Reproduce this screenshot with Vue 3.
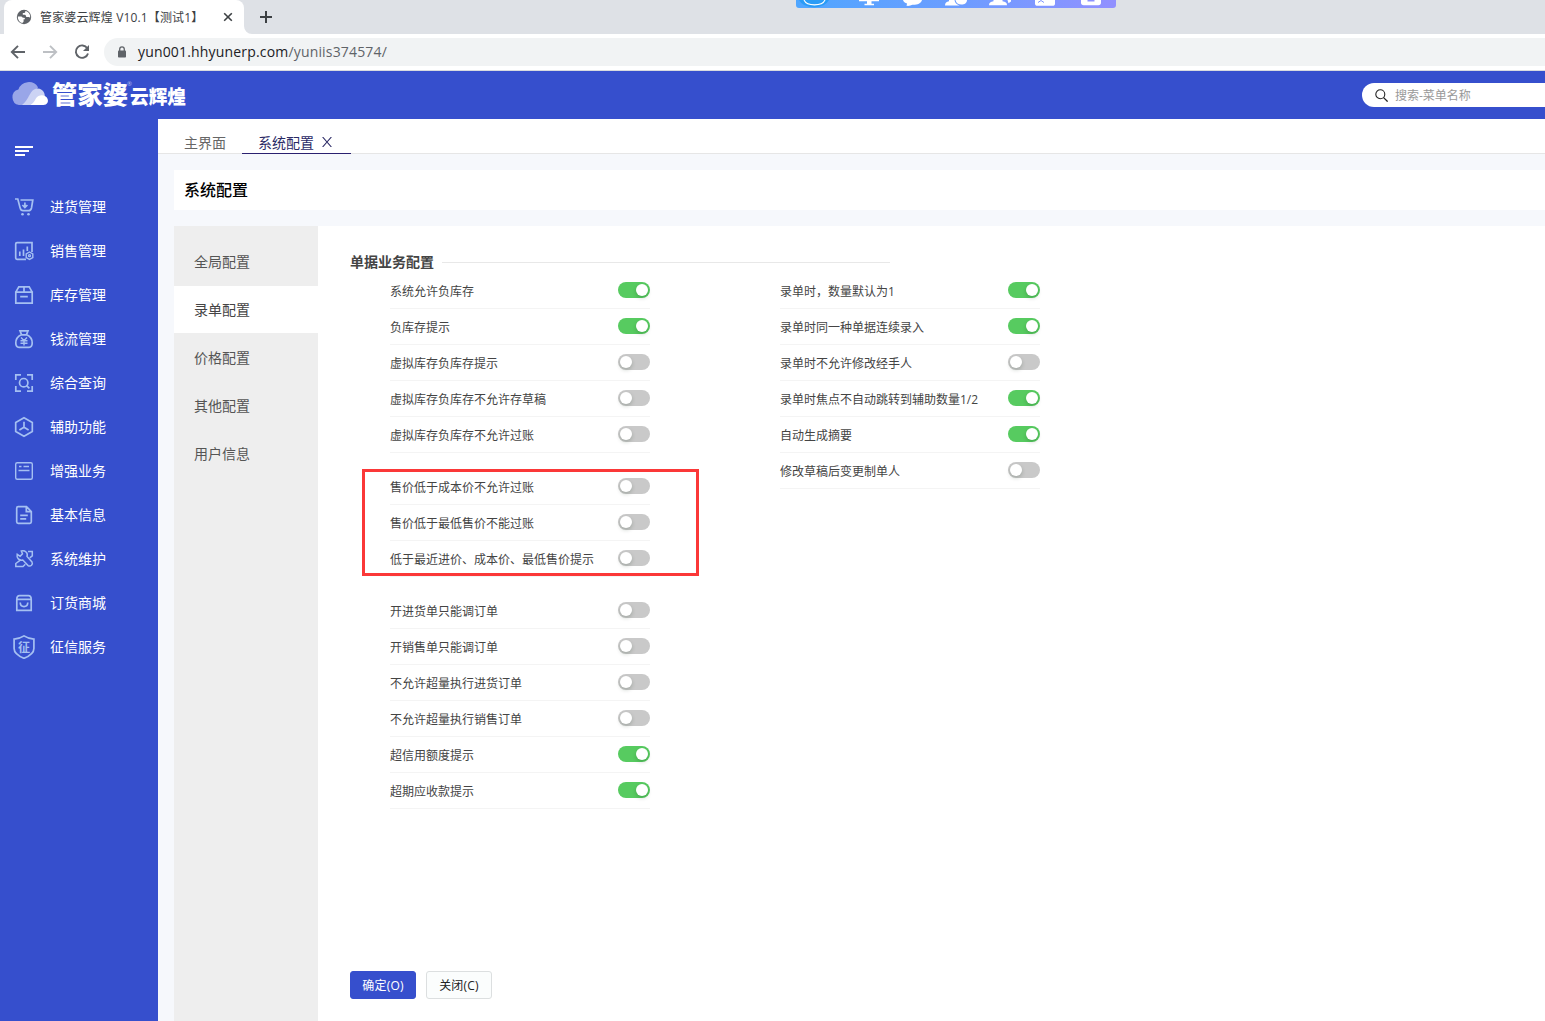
<script setup>
import { ref } from 'vue'

const menu = [
  { label: '进货管理', icon: 'cart' },
  { label: '销售管理', icon: 'sales' },
  { label: '库存管理', icon: 'box' },
  { label: '钱流管理', icon: 'money' },
  { label: '综合查询', icon: 'query' },
  { label: '辅助功能', icon: 'hex' },
  { label: '增强业务', icon: 'card' },
  { label: '基本信息', icon: 'doc' },
  { label: '系统维护', icon: 'tools' },
  { label: '订货商城', icon: 'shop' },
  { label: '征信服务', icon: 'shield' }
]

const sections = ['全局配置', '录单配置', '价格配置', '其他配置', '用户信息']
const activeSection = ref('录单配置')

const leftGroups = ref([
  {
    marked: false,
    rows: [
      { label: '系统允许负库存', on: true },
      { label: '负库存提示', on: true },
      { label: '虚拟库存负库存提示', on: false },
      { label: '虚拟库存负库存不允许存草稿', on: false },
      { label: '虚拟库存负库存不允许过账', on: false }
    ]
  },
  {
    marked: true,
    rows: [
      { label: '售价低于成本价不允许过账', on: false },
      { label: '售价低于最低售价不能过账', on: false },
      { label: '低于最近进价、成本价、最低售价提示', on: false }
    ]
  },
  {
    marked: false,
    rows: [
      { label: '开进货单只能调订单', on: false },
      { label: '开销售单只能调订单', on: false },
      { label: '不允许超量执行进货订单', on: false },
      { label: '不允许超量执行销售订单', on: false },
      { label: '超信用额度提示', on: true },
      { label: '超期应收款提示', on: true }
    ]
  }
])

const rightRows = ref([
  { label: '录单时，数量默认为1', on: true },
  { label: '录单时同一种单据连续录入', on: true },
  { label: '录单时不允许修改经手人', on: false },
  { label: '录单时焦点不自动跳转到辅助数量1/2', on: true },
  { label: '自动生成摘要', on: true },
  { label: '修改草稿后变更制单人', on: false }
])
</script>

<template>
  <div class="window">
    <div class="tabstrip">
      <div class="browser-tab">
        <svg class="globe" width="16" height="16" viewBox="0 0 16 16">
          <circle cx="8" cy="8" r="7.2" fill="#5f6368" />
          <path d="M1.800 7.400h3.400q1.300.2 1.500 1.400h1.500q.8.3.8 1.500H7.600v2.200q-.2 1-1.400 1.400C3.400 13.200 1.700 10.500 1.800 7.400z" fill="#fff" />
          <path d="M9.300 1.900v1.200q-.2 1-1.300 1H6.800v1.600H9q.9.200.9 1.200 .2 1.300 1.500 1.200h1.200q.7.100 1.500.600C14.700 5.200 12.400 2.300 9.300 1.900z" fill="#fff" />
        </svg>
        <span class="browser-title">管家婆云辉煌 V10.1【测试1】</span>
        <svg class="tab-close" width="10" height="10" viewBox="0 0 10 10"><path d="M1.200 1.200l7.600 7.600M8.800 1.200L1.200 8.800" stroke="#3c4043" stroke-width="1.600" /></svg>
      </div>
      <svg class="tab-foot" width="8" height="8" viewBox="0 0 8 8"><path d="M0 0v8h8A8 8 0 0 1 0 0z" fill="#fff" /></svg>
      <svg class="new-tab" width="14" height="14" viewBox="0 0 14 14"><path d="M7 1v12M1 7h12" stroke="#3c4043" stroke-width="2" /></svg>
      <svg class="share-bar" width="320" height="8" viewBox="0 0 320 8">
        <defs>
          <linearGradient id="share" x1="0" x2="1" y1="0" y2="0">
            <stop offset="0" stop-color="#4fa6ff" />
            <stop offset=".5" stop-color="#6b9dff" />
            <stop offset="1" stop-color="#9290ff" />
          </linearGradient>
        </defs>
        <path d="M0 0h320v5a3 3 0 0 1-3 3H3a3 3 0 0 1-3-3z" fill="url(#share)" />
        <path d="M3 0h30q-4 7-15 7.500Q7 7 3 0z" fill="#2a9cf6" />
        <path d="M8 0c3 6.500 18 6.500 21 0" stroke="#fff" stroke-width="1.100" fill="none" />
        <g fill="#fff">
          <path d="M63 0h20v1.200h-7.500v2.600H78v1.400H68.500V3.800H71V1.200h-8z" />
          <path d="M107 0h19c-1 3.500-5 5-9.500 4.800-1.800.9-3.800 1.300-6 1l.6-2.300C109 2.800 107.500 1.800 107 0z" />
          <path d="M149 5.500c0-2.500 1.500-3.700 4-4.200V0h5.500c.5 2.800 2 4.500 5 5.500z" />
          <path d="M159.500 0H171c0 3-2.700 4.700-5.700 4.600-2.800 0-5.300-1.700-5.800-4.600z" />
          <path d="M193 5.200c0-2.500 1.500-3.400 4.500-3.900V0h9v1.300c3 .5 4.500 1.500 4.500 3.900zM211.500 0h3.500v1.500l-2.500 1.800z" />
          <path d="M239 0h20v3.200q0 2.600-2.500 2.600h-15q-2.500 0-2.500-2.600z" />
          <path d="M285 0h6.500v1.500h7V0H305v2.600q0 2.700-2.700 2.700h-14.600q-2.700 0-2.700-2.700z" />
        </g>
        <path d="M242 2.500l3-2 3 2" stroke="#7f96ff" fill="none" />
      </svg>
    </div>

    <div class="toolbar">
      <svg class="nav-icon" width="16" height="16" viewBox="0 0 16 16"><path d="M15 8H2M8 1.800L1.800 8 8 14.200" stroke="#5f6368" stroke-width="1.900" fill="none" /></svg>
      <svg class="nav-icon" width="16" height="16" viewBox="0 0 16 16"><path d="M1 8h13M8 1.800L14.200 8 8 14.200" stroke="#bdc0c4" stroke-width="1.900" fill="none" /></svg>
      <svg class="nav-icon" width="16" height="16" viewBox="0 0 16 16"><path d="M13.300 4.300A6.200 6.200 0 1 0 14 9.400" stroke="#5f6368" stroke-width="1.900" fill="none" /><path d="M15 1v6H9z" fill="#5f6368" /></svg>
      <div class="address">
        <svg width="10" height="12" viewBox="0 0 10 12"><rect x="1" y="4.500" width="8" height="7" rx=".8" fill="#5f6368" /><path d="M2.700 5V3.200a2.300 2.300 0 0 1 4.600 0V5" stroke="#5f6368" stroke-width="1.300" fill="none" /></svg>
        <span class="url"><b>yun001.hhyunerp.com</b>/yuniis374574/</span>
      </div>
    </div>

    <header class="header">
      <svg class="logo" width="190" height="48" viewBox="0 0 190 48">
        <path d="M19 34a8 8 0 0 1-.6-15.600A11 11 0 0 1 38 16.200L28 34z" fill="#99a6e8" />
        <path d="M22 34c5-4 6-8 9-12.500 3.500-5.600 11-5 13.200.6 1 2.600.8 5-.2 7L36 34z" fill="#ccd3f4" />
        <path d="M30.500 34c3-2 4-4 5.500-6.800 2.500-4.200 10-4 11.500.6 1.400 3.200-.5 6.200-4 6.200z" fill="#fff" />
        <g fill="#fff" font-weight="900">
          <text x="52" y="32.500" font-size="25" textLength="76" lengthAdjust="spacingAndGlyphs">管家婆</text>
          <text x="130" y="33" font-size="19.500" textLength="56" lengthAdjust="spacingAndGlyphs">云辉煌</text>
        </g>
        <text x="127" y="15" font-size="6" fill="#b3bdf0">®</text>
      </svg>
      <div class="search">
        <svg width="13" height="13" viewBox="0 0 13 13"><circle cx="5.300" cy="5.300" r="4.500" stroke="#222" stroke-width="1.100" fill="none" /><path d="M8.600 8.600l4 4" stroke="#222" stroke-width="1.300" /></svg>
        <span>搜索-菜单名称</span>
      </div>
    </header>

    <div class="body">
      <nav class="sidebar">
        <svg class="burger" width="18" height="10" viewBox="0 0 18 10"><path d="M0 1h18M0 5h14M0 9h10" stroke="#fff" stroke-width="2" /></svg>
        <div v-for="item in menu" :key="item.icon" class="menu-item">
          <svg class="menu-icon" width="24" height="24" viewBox="0 0 24 24" fill="none" stroke="#a5c0f2" stroke-width="1.700">
            <template v-if="item.icon === 'cart'">
              <path d="M3 4h2.800L8 12.500q.8 3.200 3 3.200h5.500q2.300 0 3-2.700L20.800 5H8.500M12.900 7.500v5M10.400 10l2.500 2.500 2.500-2.500" />
              <circle cx="10.500" cy="19.300" r="1.300" fill="#a5c0f2" stroke="none" /><circle cx="16.500" cy="19.300" r="1.300" fill="#a5c0f2" stroke="none" />
            </template>
            <template v-else-if="item.icon === 'sales'">
              <path d="M14 20.300H5q-1.300 0-1.300-1.300V5q0-1.300 1.300-1.300h15V13M7.800 12.500V17M11.500 10.500V17M15.300 7.500V12" />
              <path d="M17.500 13l3.300 1.800v3.800l-3.300 1.800-3.300-1.800v-3.800z" stroke-width="1.400" /><circle cx="17.500" cy="16.700" r="1" stroke-width="1.200" />
            </template>
            <template v-else-if="item.icon === 'box'">
              <path d="M3.800 9.200h16.400v11H3.800zM3.800 9.200l3-5.400h10.400l3 5.400M12 3.800v5.400M8.200 13.700h7.600" />
            </template>
            <template v-else-if="item.icon === 'money'">
              <path d="M8 3.800h8l-1.600 4H9.600zM9.300 7.800C5.500 9.500 3.800 13 3.800 16c0 3 1.200 4.300 3.200 4.300h10c2 0 3.200-1.300 3.200-4.300 0-3-1.700-6.500-5.500-8.200" />
              <path d="M9 10.500l3 3 3-3M12 13.500v5M8.500 13.700h7M8.500 16.200h7" stroke-width="1.400" />
            </template>
            <template v-else-if="item.icon === 'query'">
              <path d="M3.800 9V3.800H9M15 3.800h5.200V9M20.200 15v5.200H15M9 20.200H3.800V15" /><circle cx="11.700" cy="11.700" r="4.200" /><path d="M14.600 14.600l2.800 2.800" />
            </template>
            <template v-else-if="item.icon === 'hex'">
              <path d="M12 2.800l8.300 4.600v9.200L12 21.200l-8.300-4.600V7.400zM12 6.800v5.800M12 12.300l-4.600 2.700M12 12.300l4.600 2.700" />
            </template>
            <template v-else-if="item.icon === 'card'">
              <rect x="3.700" y="3.700" width="16.600" height="16.600" rx="1.500" stroke-width="1.400" /><path d="M7 7.500h2.500M11.500 7.500H17M6.500 11.500h11" stroke-width="1.300" />
            </template>
            <template v-else-if="item.icon === 'doc'">
              <path d="M14.500 3.700H6.200q-1.500 0-1.500 1.500v13.600q0 1.500 1.500 1.500h11.600q1.500 0 1.500-1.500V8.500zM14.300 4v4.700h4.900M8.200 12.300h7.600M8.200 15.800h6" />
            </template>
            <template v-else-if="item.icon === 'tools'">
              <path d="M9.300 4c3.800-1 6.900 1.800 5.700 5.400l5 5.600q1 1.800-.5 3.300-1.600 1.400-3.400.3l-5.300-5.600C7.200 13.900 4.300 11 5.200 7.300l2.900 2 2.400-2.500z" stroke-width="1.500" />
              <path d="M16 4.500h4.300v4.300l-2.600 2M8.700 12.800L3.800 16.500v3H11l2.300-2.300" stroke-width="1.500" />
            </template>
            <template v-else-if="item.icon === 'shop'">
              <path d="M4.800 8.300q0-3.700 2.800-3.700h8.800q2.800 0 2.800 3.700v11H4.800zM4.800 8.300h14.400M8.200 11.500c.3 5.500 7.300 5.500 7.600 0" />
            </template>
            <template v-else>
              <path d="M12 .9c3 2 6 2.900 9.900 3.200v9.400c0 4.400-4 7.400-9.900 9.800-5.900-2.400-9.900-5.400-9.900-9.800V4.100C6 3.800 9 2.900 12 .9z" />
              <text x="6" y="16.500" font-size="12" font-weight="700" fill="#a5c0f2" stroke="none">征</text>
            </template>
          </svg>
          <span>{{ item.label }}</span>
        </div>
      </nav>

      <main class="main">
        <div class="page-tabs">
          <div class="page-tab">主界面</div>
          <div class="page-tab active">
            系统配置
            <svg width="10" height="10" viewBox="0 0 10 10"><path d="M.6 0l8.800 10M9.400 0L.6 10" stroke="#2b2a66" stroke-width="1.100" /></svg>
          </div>
        </div>
        <h1 class="page-title">系统配置</h1>
        <div class="panel">
          <aside class="sections">
            <div
              v-for="s in sections"
              :key="s"
              class="section"
              :class="{ active: s === activeSection }"
              @click="activeSection = s"
            >{{ s }}</div>
          </aside>
          <div class="content">
            <div class="legend"><span>单据业务配置</span><i></i></div>
            <div class="columns">
              <div class="column">
                <div v-for="(g, i) in leftGroups" :key="i" class="group" :class="{ marked: g.marked }">
                  <div v-for="r in g.rows" :key="r.label" class="row">
                    <span>{{ r.label }}</span>
                    <button class="switch" :class="{ on: r.on }" @click="r.on = !r.on"></button>
                  </div>
                </div>
              </div>
              <div class="column">
                <div class="group">
                  <div v-for="r in rightRows" :key="r.label" class="row">
                    <span>{{ r.label }}</span>
                    <button class="switch" :class="{ on: r.on }" @click="r.on = !r.on"></button>
                  </div>
                </div>
              </div>
            </div>
            <div class="actions">
              <button class="btn primary">确定(O)</button>
              <button class="btn">关闭(C)</button>
            </div>
          </div>
        </div>
      </main>
    </div>
  </div>
</template>

<style>
body {
  overflow: hidden;
}
</style>

<style scoped>
*,
*::before,
*::after {
  box-sizing: border-box;
}
.window {
  width: 100%;
  height: 1021px;
  display: flex;
  flex-direction: column;
  overflow: hidden;
  background: #fff;
  font-family: "Open Sans", "Noto Sans CJK SC", sans-serif;
  font-size: 12px;
  color: #444;
  white-space: nowrap;
}
.tabstrip {
  position: relative;
  flex: none;
  height: 34px;
  display: flex;
  background: #dee1e6;
  padding-left: 4px;
}
.browser-tab {
  width: 240px;
  height: 34px;
  border-radius: 8px 8px 0 0;
  background: #fff;
  display: flex;
  align-items: center;
  padding: 0 11px 0 12px;
}
.browser-title {
  flex: 1;
  margin: 2px 0 0 8px;
  font-size: 12px;
  line-height: 18px;
  letter-spacing: 0.15px;
  color: #3c4043;
}
.tab-foot {
  align-self: flex-end;
}
.new-tab {
  margin: 10px 0 0 7px;
}
.share-bar {
  position: absolute;
  left: 796px;
  top: 0;
}
.toolbar {
  flex: none;
  height: 37px;
  display: flex;
  align-items: center;
  padding: 0 0 0 10px;
  border-bottom: 1px solid #d9dbdf;
}
.nav-icon {
  flex: none;
  margin-right: 16px;
}
.address {
  flex: 1;
  height: 28px;
  margin-left: -2px;
  border-radius: 14px 0 0 14px;
  background: #f1f3f4;
  display: flex;
  align-items: center;
  padding-left: 13px;
}
.url {
  margin-left: 11px;
  font-size: 14px;
  line-height: 20px;
  letter-spacing: 0.17px;
  color: #5f6368;
}
.url b {
  font-weight: 400;
  color: #202124;
}
.header {
  flex: none;
  height: 48px;
  background: #364fcd;
  display: flex;
  align-items: center;
  justify-content: space-between;
}
.logo {
  display: block;
}
.search {
  width: 183px;
  height: 24px;
  border-radius: 12px 0 0 12px;
  background: #fff;
  display: flex;
  align-items: center;
  gap: 7px;
  padding-left: 13px;
  color: #999;
}
.body {
  flex: 1;
  display: flex;
  min-height: 0;
}
.sidebar {
  flex: none;
  width: 158px;
  background: #364fcd;
}
.burger {
  display: block;
  margin: 27px 0 29px 15px;
}
.menu-item {
  height: 44px;
  display: flex;
  align-items: center;
  padding-left: 12px;
  gap: 14px;
  font-size: 14px;
  color: #fff;
}
.menu-item span {
  padding-bottom: 2px;
}
.main {
  flex: 1;
  display: flex;
  flex-direction: column;
  background: #f6f8fc;
}
.page-tabs {
  flex: none;
  height: 35px;
  display: flex;
  background: #fff;
  border-bottom: 1px solid #e6e6e6;
  padding-left: 10px;
}
.page-tab {
  height: 35px;
  padding: 13px 16px 0;
  font-size: 14px;
  line-height: 21px;
  color: #666;
}
.page-tab.active {
  width: 109px;
  color: #2b2a66;
  border-bottom: 1px solid #2b2170;
}
.page-tab svg {
  margin: 0 0 1px 4px;
}
.page-title {
  flex: none;
  height: 40px;
  margin: 16px 0 16px 16px;
  padding-left: 10px;
  background: #fff;
  font-size: 16px;
  line-height: 40px;
  font-weight: 500;
  color: #000;
}
.panel {
  flex: 1;
  display: flex;
  margin-left: 16px;
  background: #fff;
}
.sections {
  width: 144px;
  background: #eee;
  padding-top: 12px;
}
.section {
  height: 48px;
  padding-left: 20px;
  font-size: 14px;
  line-height: 48px;
  color: #555;
}
.section.active {
  background: #fff;
  background-clip: content-box;
  padding: 0 0 1px;
  text-indent: 20px;
  color: #444;
}
.content {
  flex: 1;
  display: flex;
  flex-direction: column;
  padding: 26px 0 22px 32px;
}
.legend {
  width: 540px;
  height: 21px;
  display: flex;
  align-items: center;
  gap: 8px;
  font-size: 14px;
  line-height: 19px;
  font-weight: 700;
  color: #444;
}
.legend span {
  padding-bottom: 2px;
}
.legend i {
  flex: 1;
  height: 1px;
  background: #e8e8e8;
}
.columns {
  flex: 1;
  display: flex;
  gap: 130px;
  padding-left: 40px;
}
.column {
  width: 260px;
  display: flex;
  flex-direction: column;
  gap: 16px;
}
.group {
  position: relative;
}
.group.marked::after {
  content: "";
  position: absolute;
  left: -28px;
  top: 0;
  width: 337px;
  height: 107px;
  border: 3px solid #fb3838;
  pointer-events: none;
}
.row {
  height: 36px;
  display: flex;
  align-items: flex-start;
  justify-content: space-between;
  border-bottom: 1px solid #f4f4f4;
  padding-top: 9px;
  line-height: 19px;
}
.switch {
  position: relative;
  width: 32px;
  height: 16px;
  border: 0;
  padding: 0;
  border-radius: 8px;
  background: #c9c9c9;
}
.switch::before {
  content: "";
  position: absolute;
  left: 2px;
  top: 2px;
  width: 12px;
  height: 12px;
  border-radius: 50%;
  background: #fff;
  box-shadow: 0 2px 4px rgba(0, 35, 11, 0.2);
}
.switch.on {
  background: #57cb60;
}
.switch.on::before {
  left: 18px;
}
.actions {
  display: flex;
  gap: 10px;
}
.btn {
  width: 66px;
  height: 28px;
  border: 1px solid #dcdfe0;
  border-radius: 3px;
  background: #fbfdfd;
  padding: 0;
  font: inherit;
  letter-spacing: 0.2px;
  color: #222;
}
.btn.primary {
  border-color: #364fcd;
  background: #364fcd;
  color: #fff;
}
</style>
